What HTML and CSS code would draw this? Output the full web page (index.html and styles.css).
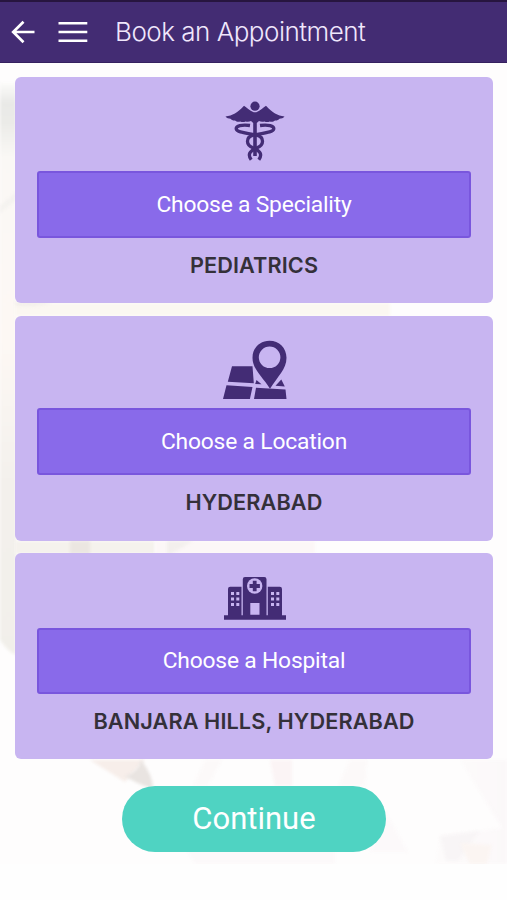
FILE: index.html
```html
<!DOCTYPE html>
<html lang="en">
<head>
<meta charset="utf-8">
<title>Book an Appointment</title>
<link rel="stylesheet" href="styles.css">
</head>
<body>
<header class="topbar">
  <button class="icon-button" aria-label="Back">
    <svg width="24" height="24" viewBox="0 0 24 24" fill="none" stroke="#fff" stroke-width="2.7"><path d="M23.5 12H2M12.5 1.8L2.2 12l10.3 10.2"/></svg>
  </button>
  <button class="icon-button menu" aria-label="Menu">
    <svg width="30" height="22" viewBox="0 0 30 22" fill="none" stroke="#fff" stroke-width="2.6"><path d="M.5 2.300h28.800M.5 11h28.800M.5 19.700h28.800"/></svg>
  </button>
  <h1 class="title">Book an Appointment</h1>
</header>
<main class="page">
  <svg class="backdrop" viewBox="0 0 507 801" preserveAspectRatio="none" aria-hidden="true">
    <defs>
      <linearGradient id="left" x1="0" y1="0" x2="0" y2="1">
        <stop offset="0" stop-color="#fbfbf9"/><stop offset=".035" stop-color="#e9e9e7"/><stop offset=".07" stop-color="#ebebe8"/>
        <stop offset=".13" stop-color="#faf8f5"/><stop offset=".45" stop-color="#fdf8f4"/><stop offset=".7" stop-color="#f3f0ec"/><stop offset="1" stop-color="#f1efea"/>
      </linearGradient>
      <linearGradient id="right" x1="0" y1="0" x2="1" y2="0">
        <stop offset="0" stop-color="#fdfbfb"/><stop offset="1" stop-color="#fbf8f9"/>
      </linearGradient>
    </defs>
    <path fill="#fefdfd" d="M0 0h507v801H0z"/>
    <path fill="url(#left)" d="M0 20h16v572Q7 588 0 577z"/>
    <path fill="#f4f2ef" d="M0 143l16-14v8L0 150z"/>
    <path fill="#fbf7f1" d="M15 240h375v13H15z"/>
    <path fill="#f2eeea" d="M15 239h38q-18 6-38 3z"/>
    <path fill="#f5f2ed" d="M15 478h140v13H15z"/>
    <path fill="#ebe6e1" d="M70 478h20v13H70z"/>
    <path fill="#fcf7f7" d="M155 478h160v13H155z"/>
    <path fill="#f3efed" d="M167 478h26l-22 13h-4z"/>
    <path fill="url(#right)" d="M460 697h47v104h-72l5-28 62-8z"/>
    <path fill="#f7eeea" d="M90 697h55l-14 15-6 7z"/>
    <path fill="#e9e4e1" d="M141 697q12 15 12 29-18-6-28-13 13-4 16-16z"/>
    <path fill="#fcf9f9" d="M205 697h17l-14 26h-15zM350 697h17l-2 26h-27z"/>
    <path fill="#fbf4f5" d="M270 697h22v26h-17z"/>
    <path fill="#fcf9fa" d="M185 785h150v16H195zM385 747l23 42h-38z"/>
    <path fill="#f8f5f6" d="M440 773l40-5-22 30h-12z"/>
    <path fill="#fbf5f2" d="M460 780l32 2-5 19h-17z"/>
  </svg>
  <section class="card">
    <svg class="icon" width="80" height="64" viewBox="0 0 80 64" fill="#432c75">
      <circle cx="40" cy="9.200" r="4.600"/>
      <path d="M10.500 19.500c7-1 12-3.800 18.500-10.800 2.700 1.400 5.400 5 9.700 6.600h2.600c4.300-1.600 7-5.200 9.700-6.600 6.500 7 11.500 9.800 18.500 10.800-1 1.600-3.300 2.200-5 2.300-1 1.500-3 1.900-4.500 1.700-1.500 1.400-3.700 1.400-5.200.9-2 .9-4 .6-5.300 0-2 .8-4 .4-5.500-.3L41.800 26v33h-3.600V26L36 24.100c-1.500.7-3.500 1.100-5.500.3-1.300.6-3.300.9-5.300 0-1.500.5-3.700.5-5.200-.9-1.500.2-3.500-.2-4.500-1.700-1.700-.1-4-.7-5-2.300z"/>
      <g fill="none" stroke="#432c75" stroke-width="3.300">
        <path d="M35 28.500c-8-1.200-14.500.4-13.700 3.600.9 3.700 13 4 20.500 6.100 7.800 2.200 7.300 9.600.4 12.600-5.500 2.400-10.800 5.200-6 12"/>
        <path d="M45 28.500c8-1.200 14.500.4 13.700 3.600-.9 3.700-13 4-20.500 6.100-7.800 2.200-7.300 9.600-.4 12.600 5.500 2.400 10.800 5.200 6 12"/>
      </g>
    </svg>
    <button class="choose">Choose a Speciality</button>
    <p class="value">PEDIATRICS</p>
  </section>
  <section class="card location">
    <svg class="icon" width="80" height="64" viewBox="0 0 80 64" fill="#432c75">
      <path d="M17 20.300h20.500l1.300 17-26-1.600zM11.500 39.300l26 1.600-2.600 12H8zM41 41.800l29.500 1.700 1 9.400H39z"/>
      <path d="M41.500 34l5 4.300-6.300-.4zM66.300 33.500l3.500 7-9.300-.8z"/>
      <path fill-rule="evenodd" d="M54.500-5.300c9.700 0 17 7.300 17 17 0 11.500-9 18.800-16.500 31-7.800-12.200-17.500-19.500-17.500-31 0-9.700 7.300-17 17-17zm.1 5.800a10.800 10.800 0 1 0 0 21.600 10.800 10.800 0 0 0 0-21.600z"/>
    </svg>
    <button class="choose">Choose a Location</button>
    <p class="value">HYDERABAD</p>
  </section>
  <section class="card hospital">
    <svg class="icon" width="80" height="46" viewBox="0 0 80 46" fill="#432c75">
      <path fill-rule="evenodd" d="M9 39.200h4V13q0-2.200 2.200-2.200H26.500v28.400h1.300V3.300Q27.800 1 30 1h19.300q2.200 0 2.200 2.300v35.900h1.300V10.800h12Q67 10.800 67 13v26.200h4v4.500H9zM35.300 38.700h9.200V27h-9.200z"/>
      <circle cx="39.700" cy="10" r="7.700" fill="#c8b5f1"/>
      <path d="M37.800 4.800h3.800v3.300h3.300v3.800h-3.300v3.300h-3.800v-3.300h-3.300V8.100h3.300z"/>
      <path fill="#c8b5f1" d="M16 16h3v3h-3zM21.300 16h3v3h-3zM16 21.400h3v3h-3zM21.300 21.400h3v3h-3zM16 27h3v3h-3zM21.300 27h3v3h-3zM56 16h3v3h-3zM61.300 16h3v3h-3zM56 21.400h3v3h-3zM61.300 21.400h3v3h-3zM56 27h3v3h-3zM61.300 27h3v3h-3z"/>
    </svg>
    <button class="choose">Choose a Hospital</button>
    <p class="value">BANJARA HILLS, HYDERABAD</p>
  </section>
  <button class="continue">Continue</button>
</main>
</body>
</html>
```

FILE: styles.css
```css
* { box-sizing: border-box; }
body { margin: 0; background: #fefefe; }
button { border: 0; padding: 0; margin: 0; background: none; color: #fff; font-family: Roboto, sans-serif; }
.topbar { height: 63px; display: flex; align-items: center; padding-left: 11px; background: #432c73; border-top: 2px solid #27153f; border-bottom: 1px solid #35205f; }
.icon-button { display: flex; }
.menu { margin-left: 23px; }
.title { margin: 0 0 0 27px; color: #f0e7fc; font: 300 26px/40px Inter, sans-serif; letter-spacing: -0.5px; white-space: nowrap; }
.page { position: relative; height: 801px; padding: 14px 14px 0 15px; display: flex; flex-direction: column; align-items: center; }
.backdrop { position: absolute; inset: 0; width: 507px; height: 801px; z-index: -1; }
.backdrop path:not(:first-of-type) { filter: blur(1.5px); }
.card { width: 478px; height: 226px; margin-bottom: 13px; padding: 20px 22px 0; display: flex; flex-direction: column; align-items: center; background: #c8b5f1; border-radius: 6px; }
.icon { display: block; overflow: visible; flex: none; margin: 0 0 10px 2px; }
.location { height: 225px; margin-bottom: 12px; padding-top: 30px; }
.location .icon { margin-bottom: -2px; }
.hospital { height: 206px; padding-top: 23px; margin-bottom: 27px; }
.hospital .icon { margin-bottom: 6px; }
.choose { flex: none; width: 434px; height: 67px; background: #896aea; border: 2px solid #7956dd; border-radius: 3px; font-size: 22.800px; letter-spacing: -0.180px; padding-bottom: 1px; }
.hospital .choose { height: 66px; }
.value { margin: 11px 0 0; color: #343039; font: 600 21.700px/32px Inter, sans-serif; letter-spacing: 0.1px; white-space: nowrap; }
.continue { flex: none; width: 264px; height: 66px; border-radius: 33px; background: #4fd3c2; font-size: 31px; padding-bottom: 2px; }
```
